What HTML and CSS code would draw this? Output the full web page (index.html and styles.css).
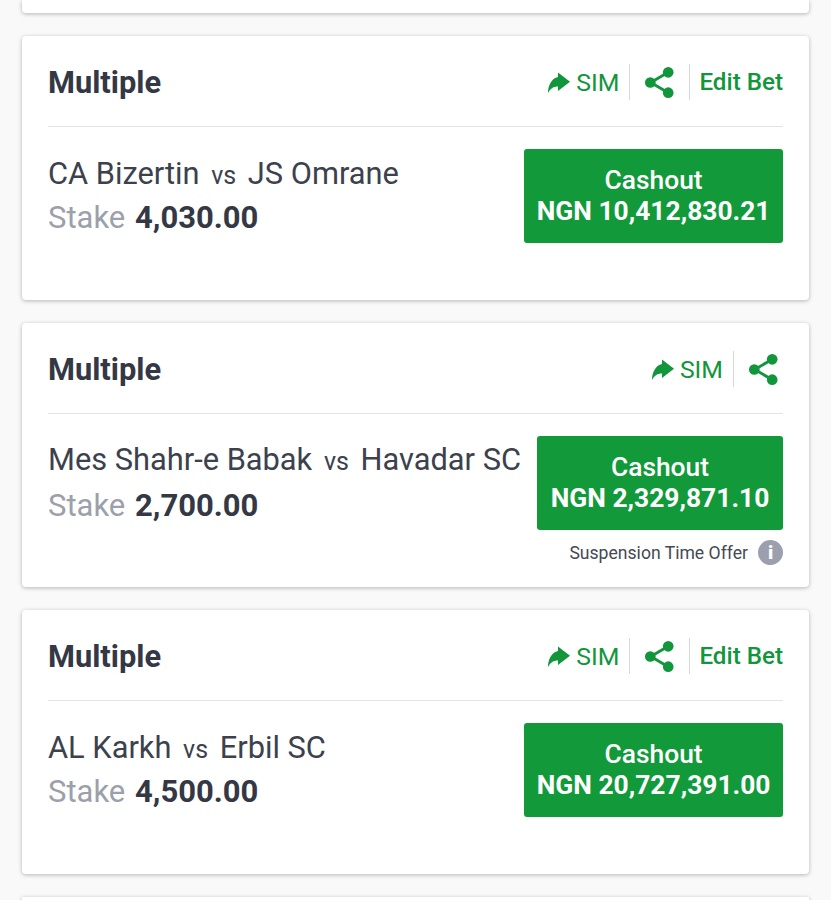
FILE: index.html
```html
<!DOCTYPE html>
<html lang="en">
<head>
  <meta charset="UTF-8">
  <meta name="viewport" content="width=device-width, initial-scale=1.0">
  <title>Open Bets</title>
  <link rel="stylesheet" href="styles.css">
</head>
<body>
  <svg width="0" height="0" class="defs">
    <symbol id="sim" viewBox="0 0 24 24">
      <path d="M11 2.500 23 11.800 11 21V16.500C6.500 16.500 3.500 18.500 1 23 1 15 5 8 11 7Z"/>
    </symbol>
    <symbol id="share" viewBox="0 0 32 34">
      <path class="share-line" d="M25 6.500 7 17 25 27.500"/>
      <circle cx="25" cy="6.500" r="5.500"/>
      <circle cx="6.500" cy="17" r="5.500"/>
      <circle cx="25" cy="27.500" r="5.500"/>
    </symbol>
  </svg>

  <main class="list">
    <div class="card card-stub"></div>

    <section class="card">
      <header class="card-head">
        <h2>Multiple</h2>
        <div class="actions">
          <a class="sim"><svg class="ico-sim"><use href="#sim"/></svg>SIM</a>
          <a class="share"><svg class="ico-share"><use href="#share"/></svg></a>
          <a class="edit">Edit Bet</a>
        </div>
      </header>
      <div class="card-body">
        <div class="bet">
          <p class="teams">CA Bizertin <span class="vs">vs</span> JS Omrane</p>
          <p class="stake"><span>Stake</span> <b>4,030.00</b></p>
        </div>
        <div class="cash">
          <button class="cash-btn">Cashout<br><b>NGN 10,412,830.21</b></button>
        </div>
      </div>
    </section>

    <section class="card">
      <header class="card-head">
        <h2>Multiple</h2>
        <div class="actions">
          <a class="sim"><svg class="ico-sim"><use href="#sim"/></svg>SIM</a>
          <a class="share share-last"><svg class="ico-share"><use href="#share"/></svg></a>
        </div>
      </header>
      <div class="card-body">
        <div class="bet bet-long">
          <p class="teams">Mes Shahr-e Babak <span class="vs">vs</span> Havadar SC</p>
          <p class="stake"><span>Stake</span> <b>2,700.00</b></p>
        </div>
        <div class="cash">
          <button class="cash-btn">Cashout<br><b>NGN 2,329,871.10</b></button>
          <p class="offer">Suspension Time Offer <i class="info">i</i></p>
        </div>
      </div>
    </section>

    <section class="card">
      <header class="card-head">
        <h2>Multiple</h2>
        <div class="actions">
          <a class="sim"><svg class="ico-sim"><use href="#sim"/></svg>SIM</a>
          <a class="share"><svg class="ico-share"><use href="#share"/></svg></a>
          <a class="edit">Edit Bet</a>
        </div>
      </header>
      <div class="card-body">
        <div class="bet">
          <p class="teams">AL Karkh <span class="vs">vs</span> Erbil SC</p>
          <p class="stake"><span>Stake</span> <b>4,500.00</b></p>
        </div>
        <div class="cash">
          <button class="cash-btn">Cashout<br><b>NGN 20,727,391.00</b></button>
        </div>
      </div>
    </section>

    <div class="card card-stub"></div>
  </main>
</body>
</html>
```

FILE: styles.css
```css
html, body {
  margin: 0;
  height: 900px;
  overflow: hidden;
  background: #f9f9f9;
  font-family: Roboto, "Liberation Sans", sans-serif;
  color: #333844;
}

.defs {
  position: absolute;
}

.list {
  display: flex;
  flex-direction: column;
  gap: 23px;
  padding: 0 22px;
}

.card {
  flex: none;
  box-sizing: border-box;
  height: 264px;
  padding: 0 26px;
  background: #fff;
  border-radius: 4px;
  box-shadow: 0 1px 4px rgba(0, 0, 0, 0.28);
}

.card-stub {
  height: 13px;
  border-radius: 0 0 4px 4px;
}

.card-head {
  display: flex;
  align-items: center;
  justify-content: space-between;
  height: 88px;
  padding-top: 2px;
  border-bottom: 1px solid #e4e4e6;
}

.card-head h2 {
  margin: 0;
  font-size: 30.800px;
  font-weight: 700;
}

.actions {
  display: flex;
  align-items: center;
  color: #12963c;
  font-size: 24.800px;
}

.actions a {
  display: flex;
  align-items: center;
  height: 36px;
}

.sim {
  padding-right: 10px;
  border-right: 1px solid #d8d8d8;
}

.ico-sim {
  width: 24px;
  height: 24px;
  margin-right: 5px;
  fill: #12963c;
}

.share {
  padding: 0 14px;
  border-right: 1px solid #d8d8d8;
}

.share-last {
  padding-right: 4px;
  border-right: 0;
}

.ico-share {
  width: 31px;
  height: 33px;
  fill: #12963c;
}

.share-line {
  fill: none;
  stroke: #12963c;
  stroke-width: 3;
}

.edit {
  padding-left: 9px;
  font-size: 24.200px;
  font-weight: 500;
}

.card-body {
  display: flex;
  justify-content: space-between;
  padding-top: 22px;
}

.bet {
  padding-top: 5px;
}

.bet-long {
  padding-top: 4px;
}

.teams {
  margin: 0;
  font-size: 30.800px;
  line-height: 40px;
  color: #3c414d;
  white-space: nowrap;
}

.vs {
  margin: 0 4px;
  font-size: 25px;
}

.stake {
  margin: 2px 0 0;
  font-size: 31px;
  line-height: 40px;
}

.bet-long .stake {
  margin-top: 4px;
}

.stake span {
  color: #9ca0aa;
  margin-right: 2px;
}

.stake b {
  font-weight: 700;
}

.cash-btn {
  display: block;
  min-width: 246px;
  height: 94px;
  margin-left: auto;
  padding: 0 12.500px;
  border: 0;
  border-radius: 3px;
  background: #11993a;
  color: #fff;
  font-family: inherit;
  font-size: 26.400px;
  font-weight: 500;
  line-height: 31px;
  white-space: nowrap;
}

.cash-btn b {
  font-weight: 700;
}

.offer {
  display: flex;
  align-items: center;
  justify-content: flex-end;
  gap: 10px;
  margin: 10px 0 0;
  font-size: 17.600px;
  color: #444955;
}

.info {
  display: block;
  width: 25px;
  height: 25px;
  border-radius: 50%;
  background: #9ca0ae;
  color: #fff;
  font-family: Roboto, sans-serif;
  font-style: normal;
  font-weight: 900;
  font-size: 19px;
  line-height: 25px;
  text-align: center;
}
```
